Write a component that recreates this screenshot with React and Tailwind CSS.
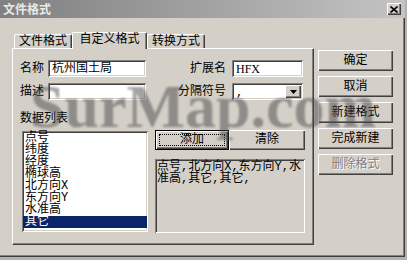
import React from "react";

const raised =
  "shadow-[inset_1px_1px_#ffffff,inset_-1px_-1px_#404040,inset_-2px_-2px_#808080]";
const sunken =
  "shadow-[inset_1px_1px_#808080,inset_-1px_-1px_#ffffff,inset_2px_2px_#404040,inset_-2px_-2px_#d4d0c8]";

const fields = ["点号", "纬度", "经度", "椭球高", "北方向X", "东方向Y", "水准高", "其它"];

const SideButton = ({ children, disabled }) => (
  <div
    className={`w-[75px] h-[21px] flex items-center justify-center bg-[#d4d0c8] ${raised} ${
      disabled ? "text-[#808080] [text-shadow:1px_1px_#ffffff]" : "text-black"
    }`}
  >
    {children}
  </div>
);

const Tab = ({ label, active }) => (
  <div
    className={`flex items-center justify-center border-l border-t border-white rounded-t-[2px] border-r border-r-[#404040] shadow-[inset_-1px_0_#808080] bg-[#d4d0c8] ${
      active ? "h-[17px] w-[75px] -mb-px relative z-10 pb-[2px]" : "h-[14px] w-[58px] pt-[1px]"
    }`}
  >
    {label}
  </div>
);

export default function App() {
  return (
    <div className="w-[407px] h-[260px] bg-[#b4b2ac] overflow-hidden font-['Liberation_Mono','Noto_Sans_CJK_SC',monospace] text-[12px] leading-[12px] text-black">
      <div
        className={`relative w-[405px] h-[257px] bg-[#d4d0c8] shadow-[inset_-1px_-1px_#404040,inset_-2px_-2px_#808080]`}
      >
        {/* Title bar */}
        <div className="h-[18px] flex items-center justify-between bg-gradient-to-r from-[#808080] to-[#c4c4c4] pl-[3px] pr-[4px]">
          <span className="font-bold text-[#e8e8e8] font-['Noto_Sans_CJK_SC',sans-serif] text-[12px]">
            文件格式
          </span>
          <div
            className={`w-[14px] h-[12px] bg-[#d4d0c8] ${raised} flex items-center justify-center`}
          >
            <svg width="8" height="7" viewBox="0 0 8 7">
              <path d="M0.5 0.5 L7.5 6.5 M7.5 0.5 L0.5 6.5" stroke="#000" strokeWidth="1.6" />
            </svg>
          </div>
        </div>

        <div className="flex pt-[14px]">
          {/* Left: tabs + panel */}
          <div className="ml-[12px] w-[302px]">
            <div className="flex items-end h-[16px] pl-[2px]">
              <Tab label="文件格式" />
              <Tab label="自定义格式" active />
              <Tab label="转换方式" />
            </div>
            <div className="h-[197px] border border-t-white border-l-white border-r-[#404040] border-b-[#404040] shadow-[inset_-1px_-1px_#808080] pt-[11px] pl-[7px]">
              {/* Row 1 */}
              <div className="flex items-center h-[17px]">
                <div className="w-[28px]">名称</div>
                <div className={`w-[98px] h-[17px] bg-white ${sunken} flex items-center pl-[4px]`}>
                  杭州国土局
                </div>
                <div className="w-[86px] text-right pr-[6px]">扩展名</div>
                <div className={`w-[71px] h-[17px] bg-white ${sunken} flex items-center pl-[4px] font-['Liberation_Serif','Noto_Sans_CJK_SC',serif]`}>
                  HFX
                </div>
              </div>

              {/* Row 2 */}
              <div className="flex items-center h-[17px] mt-[6px]">
                <div className="w-[28px]">描述</div>
                <div className={`w-[98px] h-[17px] bg-white ${sunken}`} />
                <div className="w-[86px] text-right pr-[6px]">分隔符号</div>
                <div className={`w-[71px] h-[17px] bg-white ${sunken} flex items-center justify-between pl-[4px] pr-[2px]`}>
                  <span className="pt-[3px]">,</span>
                  <div className={`w-[16px] h-[13px] bg-[#d4d0c8] ${raised} flex items-center justify-center`}>
                    <svg width="7" height="4" viewBox="0 0 7 4">
                      <path d="M0 0 H7 L3.5 4 Z" fill="#000" />
                    </svg>
                  </div>
                </div>
              </div>

              {/* Row 3 */}
              <div className="mt-[13px] h-[12px]">数据列表</div>

              {/* Row 4 */}
              <div className="flex mt-[6px]">
                <div className={`ml-[2px] w-[126px] h-[101px] bg-white ${sunken} pt-[1px] px-[1px]`}>
                  {fields.map((f) => (
                    <div
                      key={f}
                      className={`h-[12px] pl-[2px] ${
                        f === "其它" ? "bg-[#0a246a] text-white" : ""
                      }`}
                    >
                      {f}
                    </div>
                  ))}
                </div>

                <div className="ml-[7px] -mt-[1px] w-[150px]">
                  <div className="flex">
                    <div className="relative w-[74px] h-[20px] border border-black">
                      <div className={`w-full h-full ${raised} flex items-center justify-center`}>
                        添加
                      </div>
                      <div className="absolute inset-[3px] border border-dotted border-black" />
                    </div>
                    <div className={`w-[76px] h-[20px] ${raised} flex items-center justify-center`}>
                      清除
                    </div>
                  </div>
                  <div className={`mt-[9px] w-[150px] h-[74px] bg-[#d4d0c8] ${sunken} pt-[2px] pl-[2px]`}>
                    <div>点号,北方向X,东方向Y,水</div>
                    <div>准高,其它,其它,</div>
                  </div>
                </div>
              </div>
            </div>
          </div>

          {/* Right: buttons */}
          <div className="ml-[4px] mt-[18px] flex flex-col gap-[5px]">
            <SideButton>确定</SideButton>
            <SideButton>取消</SideButton>
            <SideButton>新建格式</SideButton>
            <SideButton>完成新建</SideButton>
            <SideButton disabled>删除格式</SideButton>
          </div>
        </div>

        {/* Watermark */}
        <div className="absolute left-[30px] top-[75px] pointer-events-none whitespace-nowrap font-['Liberation_Serif',serif] font-bold text-[62px] leading-none text-[#4a4a4a] opacity-50 blur-[1px]">
          SurMap.com
        </div>
      </div>
    </div>
  );
}
